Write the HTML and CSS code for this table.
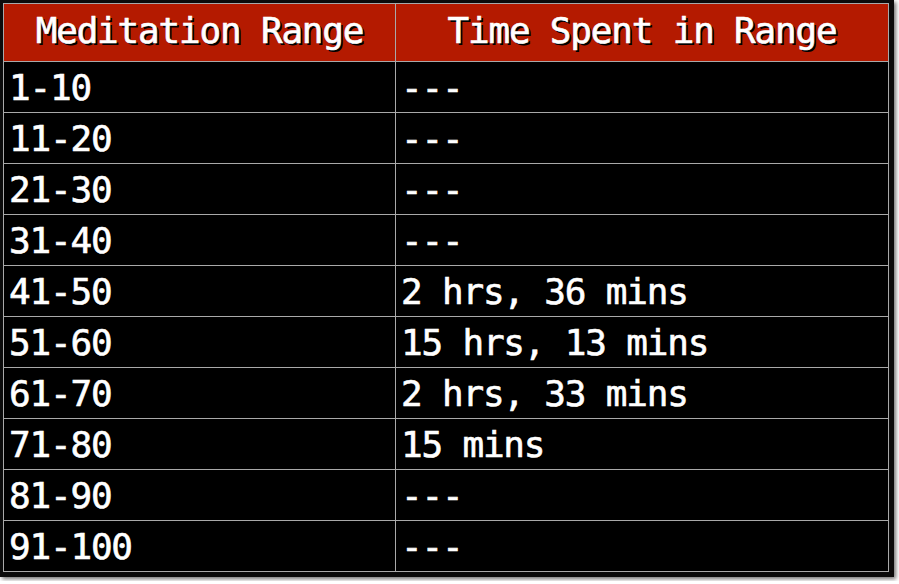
FILE: index.html
```html
<!DOCTYPE html>
<html>
<head>
<meta charset="utf-8">
<link rel="stylesheet" href="styles.css">
</head>
<body>
<div class="frame">
  <table class="ranges">
    <colgroup><col class="c1"><col class="c2"></colgroup>
    <thead>
      <tr><th>Meditation Range</th><th>Time Spent in Range</th></tr>
    </thead>
    <tbody>
      <tr><td>1-10</td><td>---</td></tr>
      <tr><td>11-20</td><td>---</td></tr>
      <tr><td>21-30</td><td>---</td></tr>
      <tr><td>31-40</td><td>---</td></tr>
      <tr><td>41-50</td><td>2 hrs, 36 mins</td></tr>
      <tr><td>51-60</td><td>15 hrs, 13 mins</td></tr>
      <tr><td>61-70</td><td>2 hrs, 33 mins</td></tr>
      <tr><td>71-80</td><td>15 mins</td></tr>
      <tr><td>81-90</td><td>---</td></tr>
      <tr><td>91-100</td><td>---</td></tr>
    </tbody>
  </table>
</div>
</body>
</html>
```
FILE: styles.css
```css
html, body {
  margin: 0;
  padding: 0;
  background: #ffffff;
}
.frame {
  display: inline-block;
  background: #0b0b0b;
  padding: 3px 5px 5px 3px;
  box-shadow: 2px 2px 4px rgba(0, 0, 0, 0.55);
}
.ranges {
  border-collapse: collapse;
  table-layout: fixed;
  width: 885px;
  font-family: "DejaVu Sans Mono", monospace;
  font-weight: normal;
  font-size: 36px;
  letter-spacing: -1.2px;
  -webkit-text-stroke: 0.6px #ffffff;
  color: #ffffff;
  background: #000000;
}
.c1 { width: 392px; }
.c2 { width: 493px; }
.ranges th, .ranges td {
  border: 1px solid #a9a9a9;
  padding: 0;
  white-space: nowrap;
}
.ranges th {
  background: #b41a00;
  height: 58px;
  text-align: center;
  font-weight: normal;
  padding-bottom: 5px;
  box-sizing: border-box;
  text-shadow: 2px 2px 0 #000000;
}
.ranges td {
  height: 48px;
  text-align: left;
  padding-left: 5px;
  padding-top: 2px;
  line-height: 48px;
}
```
